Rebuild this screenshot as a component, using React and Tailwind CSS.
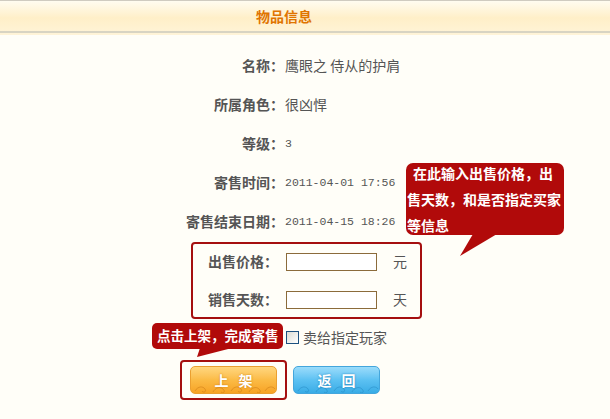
import React from "react";

const cjk = "font-['Noto_Sans_CJK_SC','Noto_Sans',sans-serif]";
const mono = "font-['Liberation_Mono','DejaVu_Sans_Mono',monospace]";

function Row({ label, children }) {
  return (
    <div className="flex items-center h-[39px]">
      <div className="w-[284px] text-right font-bold text-[14px] text-[#555]">{label}</div>
      <div className="pl-[1px] text-[14px] text-[#555] flex items-center">{children}</div>
    </div>
  );
}

function Swirl({ color }) {
  return (
    <svg className="absolute left-0 bottom-0" width="87" height="14" viewBox="0 0 87 14" fill="none">
      <path d="M4 12c3-5 8-5 10-2s-2 4-3 2M22 13c2-4 7-6 10-3s0 5-2 3M40 12c3-5 8-5 10-2s-2 4-3 2M58 13c2-4 7-6 10-3s0 5-2 3M74 12c3-5 8-5 10-2" stroke={color} strokeWidth="1" opacity="0.6" />
    </svg>
  );
}

function FieldRow({ label, unit }) {
  return (
    <div className="flex items-center h-[35px]">
      <div className="w-[85px] text-right font-bold text-[14px] text-[#555]">{label}</div>
      <div className="ml-[8px] w-[91px] h-[18px] border border-[#8b6b3b] bg-white" />
      <div className="ml-[16px] text-[14px] text-[#555]">{unit}</div>
    </div>
  );
}

export default function App() {
  return (
    <div className={`relative w-[610px] h-[419px] overflow-hidden bg-[#fffef8] ${cjk}`}>
      {/* header */}
      <div className="h-[35px] border-t border-[#cfcbc0] bg-gradient-to-b from-[#fffcf0] via-[#ffefc8] to-[#fff4d8]">
        <div className="h-[32px] flex items-center justify-center pr-[42px] border-b-2 border-[#d8d4c3]">
          <span className="text-[14px] font-bold text-[#e07400]">物品信息</span>
        </div>
      </div>

      {/* info rows */}
      <div className="mt-[11px]">
        <Row label="名称：">鹰眼之 侍从的护肩</Row>
        <Row label="所属角色：">很凶悍</Row>
        <Row label="等级："><span className={`${mono} text-[11.5px]`}>3</span></Row>
        <Row label="寄售时间："><span className={`${mono} text-[11.5px]`}>2011-04-01 17:56</span></Row>
        <Row label="寄售结束日期："><span className={`${mono} text-[11.5px]`}>2011-04-15 18:26</span></Row>
      </div>

      {/* price/day box */}
      <div className="mt-[1px] ml-[191px] w-[231px] border-2 border-[#a50f0f] rounded-[4px] flex flex-col gap-[3px]">
        <FieldRow label="出售价格：" unit="元" />
        <FieldRow label="销售天数：" unit="天" />
      </div>

      {/* checkbox row */}
      <div className="relative mt-[1px] h-[34px] flex items-center pl-[286px]">
        <div className="w-[13px] h-[13px] border border-[#1c5180] bg-gradient-to-br from-[#dcdcd4] to-white" />
        <span className="ml-[4px] text-[14px] text-[#555]">卖给指定玩家</span>

        {/* small callout */}
        <div className="absolute left-[152px] top-[3px] w-[131px] h-[26px] rounded-[5px] bg-[#b10a0a] flex items-center pl-[5px]">
          <span className="text-white font-bold text-[13.5px] leading-none whitespace-nowrap">点击上架，完成寄售</span>
        </div>
        <svg className="absolute left-[196px] top-[28px]" width="40" height="10" viewBox="0 0 40 10">
          <polygon points="4,0 36,0 1,9" fill="#b10a0a" />
        </svg>
      </div>

      {/* buttons */}
      <div className="mt-[6px] ml-[180px] flex items-start">
        <div className="w-[107px] h-[40px] border-2 border-[#a50f0f] rounded-[4px] pl-[8px] pt-[4px]">
          <div className="relative w-[87px] h-[28px] rounded-[5px] border border-[#eba030] bg-gradient-to-b from-[#ffd77e] via-[#fbbb45] to-[#f7a323] flex items-center justify-center overflow-hidden">
            <Swirl color="#d0801a" />
            <span className="relative text-white font-bold text-[14px] tracking-[10px] pl-[10px] [text-shadow:0_0_2px_#c77a10]">上架</span>
          </div>
        </div>
        <div className="relative ml-[6px] mt-[6px] w-[87px] h-[28px] rounded-[5px] border border-[#44a6dc] bg-gradient-to-b from-[#9adcfb] via-[#5cc1f2] to-[#38ace6] flex items-center justify-center overflow-hidden">
          <Swirl color="#2c8fc8" />
          <span className="relative text-white font-bold text-[14px] tracking-[10px] pl-[10px] [text-shadow:0_0_2px_#1d7db5]">返回</span>
        </div>
      </div>

      {/* big callout */}
      <div className="absolute left-[406px] top-[163px] w-[158px] h-[72px] rounded-[7px] bg-[#b10a0a] text-white font-bold text-[14px] leading-[26px] whitespace-nowrap">
        <div className="-mt-[3px] pl-[1px]">
          <div className="pl-[6px]">在此输入出售价格，出</div>
          <div>售天数，和是否指定买家</div>
          <div>等信息</div>
        </div>
      </div>
      <svg className="absolute left-[458px] top-[234px]" width="42" height="24" viewBox="0 0 42 24">
        <polygon points="15,0 39,0 2,22" fill="#b10a0a" />
      </svg>
    </div>
  );
}
